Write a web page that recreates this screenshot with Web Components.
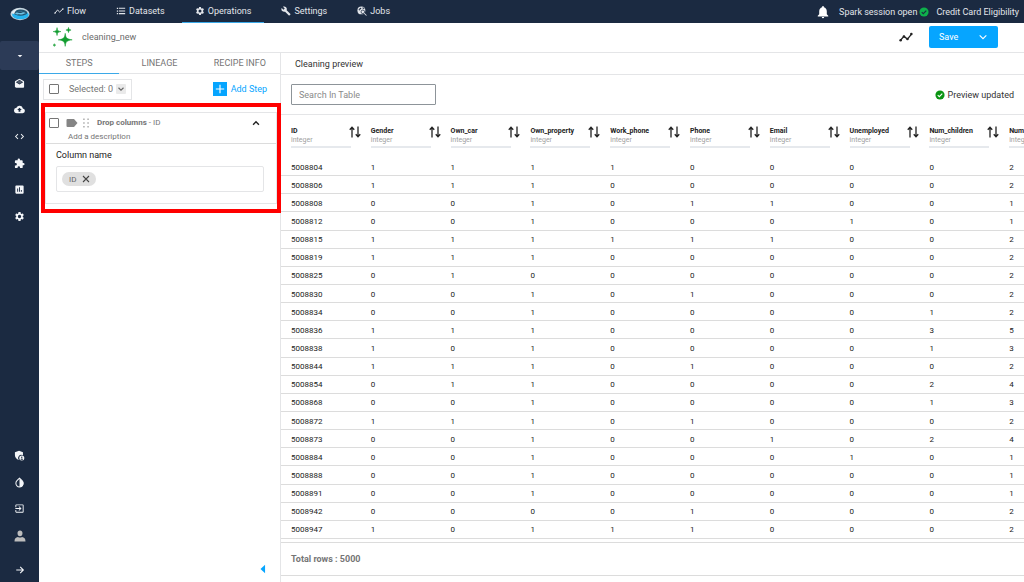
<!DOCTYPE html>
<html lang="en">
<head>
<meta charset="utf-8">
<meta name="viewport" content="width=device-width, initial-scale=1">
<title>cleaning_new</title>
<style>
html, body { margin: 0; height: 100%; }
body { font-family: Roboto, "Liberation Sans", sans-serif; font-size: 9px; color: #333; background: #fff; overflow: hidden;
  --navy: #1b2a41; --blue: #06a5ff; --line: #e4e5e7; --grey: #757575; }
</style>
</head>
<body>
<recipe-app></recipe-app>
<script>
const ICONS = {
  flow: '<path d="M2 17.500l6.500-8 5 5L21.500 7" fill="none" stroke="currentColor" stroke-width="2.400"/><circle cx="2.500" cy="17" r="1.800"/><circle cx="21.500" cy="7" r="1.800"/>',
  list: '<path d="M2 4h3v3H2zm5 0h15v2.500H7zM2 10.500h3v3H2zm5 0h15V13H7zM2 17h3v3H2zm5 0h15v2.500H7z"/>',
  gear: '<path d="M19.140 12.940c.040-.300.060-.610.060-.940s-.020-.640-.070-.940l2.030-1.580a.490.490 0 0 0 .120-.610l-1.920-3.320a.490.490 0 0 0-.590-.220l-2.390.960a7 7 0 0 0-1.620-.940l-.360-2.540a.480.480 0 0 0-.480-.410h-3.840a.480.480 0 0 0-.470.410l-.360 2.540c-.590.240-1.130.570-1.620.940l-2.390-.960a.480.480 0 0 0-.590.220L2.740 8.870a.480.480 0 0 0 .120.610l2.030 1.580c-.050.300-.090.630-.090.940s.020.640.070.940l-2.030 1.580a.490.490 0 0 0-.120.610l1.920 3.320c.120.220.370.290.590.220l2.390-.960c.500.380 1.030.700 1.620.940l.360 2.540c.050.240.240.410.480.410h3.840c.240 0 .440-.170.470-.410l.360-2.540a6.800 6.800 0 0 0 1.620-.940l2.390.960c.220.080.470 0 .590-.220l1.920-3.320a.480.480 0 0 0-.120-.610zM12 15.600A3.600 3.600 0 1 1 12 8.400a3.600 3.600 0 0 1 0 7.200z"/>',
  wrench: '<path d="M22.700 19l-9.100-9.100c.900-2.300.4-5-1.500-6.900-2-2-5-2.400-7.400-1.300L9 6 6 9 1.600 4.700C.4 7.100.9 10.100 2.900 12.100c1.900 1.900 4.600 2.400 6.900 1.500l9.100 9.100c.4.4 1 .4 1.400 0l2.300-2.300c.5-.4.5-1.100.1-1.400z"/>',
  jobs: '<circle cx="10.500" cy="10.500" r="9.500"/><path d="M3.500 9l4-5 3 .5-1 3-3 1-.5 3zM12 4l4-.5 2.500 3.500-4-.5z" fill="#1b2a41"/><circle cx="14" cy="14" r="4.300" fill="none" stroke="#1b2a41" stroke-width="1.800"/><path d="M16.500 18l1.500-1.500 5.500 5.500-1.500 1.500z"/>',
  bell: '<path d="M12 22.500a2 2 0 0 0 2-2h-4a2 2 0 0 0 2 2zM18.500 16v-5.500c0-3.300-2-5.800-5-6.600V3a1.500 1.500 0 0 0-3 0v.9c-3 .8-5 3.300-5 6.600V16l-2.500 2.500v1h18v-1z"/>',
  check: '<circle cx="12" cy="12" r="11"/><path d="M6.500 12.300l3.800 3.800 7.200-7.500" fill="none" stroke="var(--mark, #fff)" stroke-width="2.600"/>',
  caret: '<path d="M5 9h14l-7 7z"/>',
  left: '<path d="M17 2v20L6 12z"/>',
  mail: '<path d="M22 8.500c0-.7-.4-1.300-.9-1.700L12 1.500 2.900 6.800C2.400 7.200 2 7.800 2 8.500V19c0 1.100.9 2 2 2h16a2 2 0 0 0 2-2zM12 14L4 9l8-5 8 5z"/><path d="M6 8.700l6-3.700 6 3.700-6 3.700z" opacity=".25"/>',
  cloud: '<path d="M19.350 10.040A7.490 7.490 0 0 0 5.350 8.040 6 6 0 0 0 6 20h13a5 5 0 0 0 .350-9.960zM14 13v4h-4v-4H7l5-5 5 5z"/>',
  code: '<path d="M9.400 16.600L4.800 12l4.600-4.600L8 6l-6 6 6 6zm5.200 0l4.600-4.600-4.600-4.600L16 6l6 6-6 6z"/>',
  puzzle: '<path d="M20.500 11H19V7a2 2 0 0 0-2-2h-4V3.500a2.500 2.500 0 0 0-5 0V5H4a2 2 0 0 0-2 2v3.800h1.500a2.700 2.700 0 0 1 0 5.400H2V20c0 1.100.9 2 2 2h3.800v-1.500a2.700 2.700 0 0 1 5.400 0V22H17a2 2 0 0 0 2-2v-4h1.500a2.500 2.500 0 0 0 0-5z"/>',
  chart: '<path d="M19 3H5a2 2 0 0 0-2 2v14c0 1.100.9 2 2 2h14a2 2 0 0 0 2-2V5a2 2 0 0 0-2-2zM9 17H7v-7h2zm4 0h-2V7h2zm4 0h-2v-4h2z"/>',
  shield: '<path d="M11 1.500L2 5v6c0 5 3.500 9.500 8.500 11a7 7 0 0 1 9-10.500V5z"/><circle cx="17" cy="17.500" r="5.500"/><circle cx="17" cy="16" r="1.600" fill="#1b2a41"/><path d="M14 20c1-2 5-2 6 0-1.500 2-4.500 2-6 0z" fill="#1b2a41"/>',
  drop: '<path d="M12 2.500L6.500 8a7.900 7.900 0 1 0 11 0z" fill="none" stroke="currentColor" stroke-width="2.200"/><path d="M12 2l6 6a8 8 0 0 1-6 14z"/>',
  exit: '<path d="M10 15.600l1.400 1.400 5-5-5-5L10 8.400l2.600 2.600H3v2h9.600zM19 3H5a2 2 0 0 0-2 2v4h2V5h14v14H5v-4H3v4c0 1.100.9 2 2 2h14a2 2 0 0 0 2-2V5a2 2 0 0 0-2-2z"/>',
  person: '<path d="M12 1c3 0 5 2.200 5 5.300S15 12.500 12 12.500 7 9.400 7 6.300 9 1 12 1zM1 23c0-6 2.500-8 7-9 2.500 1.500 5.500 1.500 8 0 4.500 1 7 3 7 9z"/>',
  arrow: '<path d="M3 12h17M12.500 4.500L20 12l-7.500 7.500" fill="none" stroke="currentColor" stroke-width="2.600"/>',
  down: '<path d="M4 8l8 8 8-8" fill="none" stroke="currentColor" stroke-width="2.600"/>',
  smalldown: '<path d="M6 9l6 6 6-6" fill="none" stroke="currentColor" stroke-width="2.600"/>',
  up: '<path d="M5 16l7-7 7 7" fill="none" stroke="currentColor" stroke-width="3.400"/>',
  plus: '<path d="M12 2v20M2 12h20" fill="none" stroke="currentColor" stroke-width="2.800"/>',
  close: '<path d="M3 3l18 18M21 3L3 21" fill="none" stroke="currentColor" stroke-width="3.200"/>',
  tag: '<path d="M1 6a2 2 0 0 1 2-2h13l7 8-7 8H3a2 2 0 0 1-2-2z"/>',
  drag: '<path d="M5 1h4v4H5zm10 0h4v4h-4zM5 10h4v4H5zm10 0h4v4h-4zM5 19h4v4H5zm10 0h4v4h-4z"/>',
  sort: '<path d="M6 23V3M1.500 7.500L6 2.500l4.500 5" fill="none" stroke="currentColor" stroke-width="2.600"/><path d="M18 1v20M13.500 16.500l4.500 5 4.500-5" fill="none" stroke="currentColor" stroke-width="2.600"/>',
  trend: '<path d="M2.500 17.500l6-6.500 6 4.500 7-8.500" fill="none" stroke="currentColor" stroke-width="2.200"/><circle cx="2.800" cy="17.500" r="2.200"/><circle cx="8.500" cy="11" r="2.200"/><circle cx="14.500" cy="15.500" r="2.200"/><circle cx="21.200" cy="7" r="2.200"/>',
  sparkle: '<path d="M14.400 8c.7 5.300 1.600 6.200 7.600 7.100-6 .9-6.900 1.800-7.600 7.100-.7-5.300-1.600-6.200-7.600-7.100 6-.9 6.900-1.800 7.600-7.100zM5.500 1.800c.5 3.400.9 3.800 4.200 4.300-3.300.5-3.700.9-4.200 4.300C5 7 4.600 6.600 1.300 6.100 4.600 5.600 5 5.200 5.500 1.800zM18 1.600c.4 2 .8 2.400 2.800 2.800-2 .4-2.400.8-2.800 2.800-.4-2-.8-2.400-2.800-2.800 2-.4 2.400-.8 2.800-2.800zM2.600 19.300c.2 1.100.4 1.300 1.500 1.500-1.100.2-1.300.4-1.500 1.500-.2-1.100-.4-1.300-1.500-1.500 1.100-.2 1.300-.4 1.500-1.500z" stroke="currentColor" stroke-width=".6"/>',
  logo: '<ellipse cx="12" cy="12" rx="11.500" ry="7.400" fill="#c3d2dc"/><ellipse cx="12.500" cy="13" rx="10" ry="5.400" fill="#25b4f0"/><ellipse cx="12.500" cy="10.400" rx="8.200" ry="3.700" fill="#245673"/><path d="M6 11.500c3-3 9-3 13-.5-3 .3-4 2-7 1.500-2-.4-4 .6-6-1z" fill="#6fc3e4"/><path d="M8 10c2-1 6-1 8 0-2 1-6 1-8 0z" fill="#1c415c"/><path d="M2 10c3-4 8-5 12-4.500-5 .5-8 2.500-9 6.500-1.500 0-2.500-1-3-2z" fill="#e6edf1"/>'
};

/* Registers an element whose shadow root is built from its css and markup. */
function element(name, css, markup, setup) {
  customElements.define(name, class extends HTMLElement {
    connectedCallback() {
      if (this.shadowRoot) return;
      const t = document.createElement('template');
      t.innerHTML = `<style>*{box-sizing:border-box}button{font:inherit;color:inherit;background:none;border:0;padding:0;margin:0;cursor:pointer}a{color:inherit;text-decoration:none}${css}</style>` +
        (typeof markup === 'function' ? markup(this) : markup);
      this.attachShadow({ mode: 'open' }).append(t.content.cloneNode(true));
      if (setup) setup(this);
    }
  });
}

element('ui-icon', ':host{display:block;flex:none;width:10px;height:10px}svg{display:block;width:100%;height:100%}',
  el => `<svg viewBox="0 0 24 24" fill="currentColor" aria-hidden="true">${ICONS[el.getAttribute('name')]}</svg>`);

element('ui-checkbox', `:host{display:block;flex:none;width:10px;height:10px}
  input{appearance:none;display:block;margin:0;width:100%;height:100%;border:1px solid #757575;border-radius:1px;background:#fff}
  input:checked{background:var(--blue)}`,
  el => `<input type="checkbox" aria-label="${el.getAttribute('label')}">`);

element('nav-link', `:host{display:block;height:100%}
  a{display:flex;align-items:center;gap:3px;height:100%;padding:0 13px;color:#e3e6eb;border-bottom:1px solid transparent}
  :host([active]) a{border-color:#3ba9e8}`,
  el => `<a href="#"><ui-icon name="${el.getAttribute('icon')}"></ui-icon><slot></slot></a>`);

element('top-bar', `:host{display:flex;justify-content:space-between;height:23px;background:var(--navy);color:#e3e6eb}
  nav{display:flex;gap:4px;padding-left:2px}
  .status{display:flex;align-items:center;padding-right:5px}
  button ui-icon{width:14px;height:14px;color:#fff}
  .session{display:flex;align-items:center;gap:2px;margin:0 7px 0 9px}
  .session ui-icon{color:#0eb04b;--mark:#1b2a41}`,
  `<nav aria-label="Project"><nav-link icon="flow">Flow</nav-link><nav-link icon="list">Datasets</nav-link>
   <nav-link icon="gear" active>Operations</nav-link><nav-link icon="wrench">Settings</nav-link><nav-link icon="jobs">Jobs</nav-link></nav>
   <div class="status"><button aria-label="Notifications"><ui-icon name="bell"></ui-icon></button>
   <span class="session">Spark session open<ui-icon name="check"></ui-icon></span><span>Credit Card Eligibility</span></div>`);

const railLink = (icon, label) => `<a href="#" aria-label="${label}"><ui-icon name="${icon}"></ui-icon></a>`;
element('side-rail', `:host{display:flex;flex-direction:column;width:39px;background:var(--navy);color:#f4f6f9}
  a,button{display:grid;place-items:center;width:100%}
  .logo{height:28px;margin-bottom:13px}.logo ui-icon{width:20px;height:20px}
  .project{height:29px;background:#2c3b57;border-radius:2px}.project ui-icon{width:8px;height:8px}
  nav{display:grid;grid-auto-rows:1fr}
  nav a ui-icon{width:11px;height:11px}
  .main{height:160px}
  .more{height:107px;margin-top:auto}
  .more a:last-child{color:#bdbdbd}.more a:last-child ui-icon{width:12px;height:12px}
  .expand{height:24px;margin-top:9px}`,
  `<a class="logo" href="#" aria-label="Home"><ui-icon name="logo"></ui-icon></a>
   <button class="project" aria-label="Choose project"><ui-icon name="caret"></ui-icon></button>
   <nav class="main" aria-label="Main">${railLink('mail','Inbox')}${railLink('cloud','Upload')}${railLink('code','Code')}${railLink('puzzle','Plugins')}${railLink('chart','Charts')}${railLink('gear','Settings')}</nav>
   <nav class="more" aria-label="Account">${railLink('shield','Admin')}${railLink('drop','Theme')}${railLink('exit','Sign out')}${railLink('person','Profile')}</nav>
   <button class="expand" aria-label="Expand"><ui-icon name="arrow"></ui-icon></button>`);

element('recipe-header', `:host{display:flex;align-items:center;height:30px;padding:0 26px 1px 13px;border-bottom:1px solid var(--line);box-sizing:border-box}
  .mark{width:22px;height:22px;color:#119c2f}
  h1{margin:0 auto 0 8px;font-size:9px;font-weight:400;color:#6b6b6b}
  .trend ui-icon{width:14px;height:14px;color:#222}
  .save{display:flex;align-items:center;justify-content:space-between;width:69px;height:22px;margin-left:16px;padding:0 10px;background:var(--blue);color:#fff;border-radius:2px}`,
  `<ui-icon class="mark" name="sparkle"></ui-icon><h1>cleaning_new</h1>
   <button class="trend" aria-label="Activity"><ui-icon name="trend"></ui-icon></button>
   <button class="save">Save<ui-icon name="down"></ui-icon></button>`);

element('step-card', `:host{display:block;position:relative;padding:9px 4px;color:var(--grey)}
  /* attention frame drawn over the whole step */
  .frame{position:absolute;inset:0;border:4px solid #f00;pointer-events:none}
  article{border:1px solid var(--line)}
  header{height:31px;padding:4px 3px 0 3px;border-bottom:1px solid #dcdcdc;font-size:8px;line-height:10px}
  .row{display:flex;align-items:center}
  .tag{width:12px;height:12px;margin:0 3px 0 7px;color:#858585}
  .drag{margin-right:6px;color:#b5b5b5}
  h2{margin:0;font-size:8px;font-weight:400}
  .toggle{margin-left:auto;margin-right:12px;color:#222}
  p{margin:3px 0 0 19px}
  .body{padding:6px 12px 11px 10px;color:#222}
  h3{margin:0 0 5px;font-size:9px;line-height:11px;font-weight:400}
  .field{display:flex;align-items:center;height:26px;padding:0 5px;border:1px solid var(--line);border-radius:2px}
  .chip{display:flex;align-items:center;gap:6px;height:14px;padding:0 6px 0 7px;background:#e0e0e0;border-radius:7px;font-size:8px;color:#666}
  .chip ui-icon{width:8px;height:8px;color:#444}`,
  `<article><header><div class="row"><ui-checkbox label="Select Drop columns"></ui-checkbox><ui-icon class="tag" name="tag"></ui-icon><ui-icon class="drag" name="drag"></ui-icon>
   <h2><b>Drop columns</b> - ID</h2><button class="toggle" aria-label="Collapse step"><ui-icon name="up"></ui-icon></button></div><p>Add a description</p></header>
   <div class="body"><h3>Column name</h3><div class="field"><span class="chip">ID<button aria-label="Remove ID"><ui-icon name="close"></ui-icon></button></span></div></div></article><div class="frame"></div>`);

element('steps-panel', `:host{display:flex;flex-direction:column;border-right:1px solid var(--line);color:var(--grey)}
  .tabs{display:grid;grid-template-columns:repeat(3,1fr);height:21px;border-bottom:1px solid var(--line)}
  .tabs a{display:grid;place-items:center;border-bottom:1px solid transparent;margin-bottom:-1px}
  .tabs a.on{border-color:#3ba9e8}
  .tools{display:flex;align-items:center;justify-content:space-between;height:30px;padding:0 13px 0 4px}
  .pick{display:flex;align-items:center;height:21px;padding:0 5px;border:1px solid var(--line)}
  .pick span{margin:0 3px 0 10px}
  .pick button{background:#eaeaea;border-radius:1px;color:#666}
  .add{display:flex;align-items:center;gap:4px;color:var(--blue)}
  .add i{display:grid;place-items:center;width:14px;height:14px;background:var(--blue);color:#fff}
  step-card{margin:-1px -1px 0 2px}
  .hide{margin:auto 12px 8px auto;color:var(--blue)}`,
  `<div class="tabs"><a class="on" href="#">STEPS</a><a href="#">LINEAGE</a><a href="#">RECIPE INFO</a></div>
   <div class="tools"><div class="pick"><ui-checkbox label="Select all steps"></ui-checkbox><span>Selected: 0</span><button aria-label="Selection actions"><ui-icon name="smalldown"></ui-icon></button></div>
   <button class="add"><i><ui-icon name="plus"></ui-icon></i>Add Step</button></div>
   <step-card></step-card><button class="hide" aria-label="Hide panel"><ui-icon name="left"></ui-icon></button>`);

const COLUMNS = ['ID','Gender','Own_car','Own_property','Work_phone','Phone','Email','Unemployed','Num_children','Num'];
const ROWS = `5008804 1 1 1 1 0 0 0 0 2
5008806 1 1 1 0 0 0 0 0 2
5008808 0 0 1 0 1 1 0 0 1
5008812 0 0 1 0 0 0 1 0 1
5008815 1 1 1 1 1 1 0 0 2
5008819 1 1 1 0 0 0 0 0 2
5008825 0 1 0 0 0 0 0 0 2
5008830 0 0 1 0 1 0 0 0 2
5008834 0 0 1 0 0 0 0 1 2
5008836 1 1 1 0 0 0 0 3 5
5008838 1 0 1 0 0 0 0 1 3
5008844 1 1 1 0 1 0 0 0 2
5008854 0 1 1 0 0 0 0 2 4
5008868 0 0 1 0 0 0 0 1 3
5008872 1 1 1 0 1 0 0 0 2
5008873 0 0 1 0 0 1 0 2 4
5008884 0 0 1 0 0 0 1 0 1
5008888 0 0 1 0 0 0 0 0 1
5008891 0 0 1 0 0 0 0 0 1
5008942 0 0 0 0 1 0 0 0 2
5008947 1 0 1 1 1 0 0 0 2`.split('\n').map(r => r.split(' '));

element('data-table', `:host{display:block;overflow:hidden}
  table{width:798px;height:100%;table-layout:fixed;border-collapse:separate;border-spacing:0;font-size:8px;line-height:10px;color:#222}
  th,td{padding:0 0 0 10px;text-align:left}
  th{height:43px;padding-top:11px;vertical-align:top;font-size:7px}
  .name{display:flex;justify-content:space-between;height:10px;white-space:nowrap}
  .name ui-icon{width:12px;height:12px}
  small{display:block;font-size:7px;font-weight:400;line-height:8px;color:#a0a0a0}
  .bar{width:60px;height:2px;margin-top:2px;background:#e6e9ed}
  td{height:18px;padding-top:2px;border-bottom:1px solid #dcdcdc}`,
  `<table><thead><tr>${COLUMNS.map(c => `<th scope="col"><div class="name">${c}<button aria-label="Sort by ${c}"><ui-icon name="sort"></ui-icon></button></div><small>integer</small><div class="bar"></div></th>`).join('')}</tr></thead>
   <tbody>${ROWS.map(r => `<tr>${r.map(v => `<td>${v}</td>`).join('')}</tr>`).join('')}</tbody></table>`);

element('preview-panel', `:host{display:flex;flex-direction:column;min-width:0}
  h2{margin:0;height:22px;padding-left:14px;border-bottom:1px solid var(--line);font-size:9px;line-height:22px;font-weight:400}
  .tools{display:flex;align-items:center;justify-content:space-between;height:40px;padding:0 10px;border-bottom:1px solid var(--line)}
  input{width:145px;height:21px;margin:0;padding:0 7px;border:1px solid #8d9499;border-radius:1px;font:inherit;color:#333;outline:0}
  input::placeholder{color:#8a8a8a;opacity:1}
  .state{display:flex;align-items:center;gap:3px}
  .state ui-icon{color:#0a9412}
  data-table{flex:1;min-height:0}
  footer{height:34px;margin:3px 0 6px;padding-left:10px;border:solid #dcdcdc;border-width:1px 0;font-weight:700;line-height:32px;color:#757575}`,
  `<h2>Cleaning preview</h2><div class="tools"><input type="search" placeholder="Search In Table" aria-label="Search In Table">
   <span class="state"><ui-icon name="check"></ui-icon>Preview updated</span></div><data-table></data-table><footer>Total rows : 5000</footer>`);

element('recipe-app', `:host{display:grid;grid-template-columns:auto 1fr;height:100vh}
  main{display:grid;grid-template:auto auto 1fr / 242px 1fr;min-width:0;min-height:0}
  top-bar,recipe-header{grid-column:1/-1}
  preview-panel,steps-panel{min-height:0}`,
  `<side-rail></side-rail><main><top-bar></top-bar><recipe-header></recipe-header><steps-panel></steps-panel><preview-panel></preview-panel></main>`);
</script>
</body>
</html>
